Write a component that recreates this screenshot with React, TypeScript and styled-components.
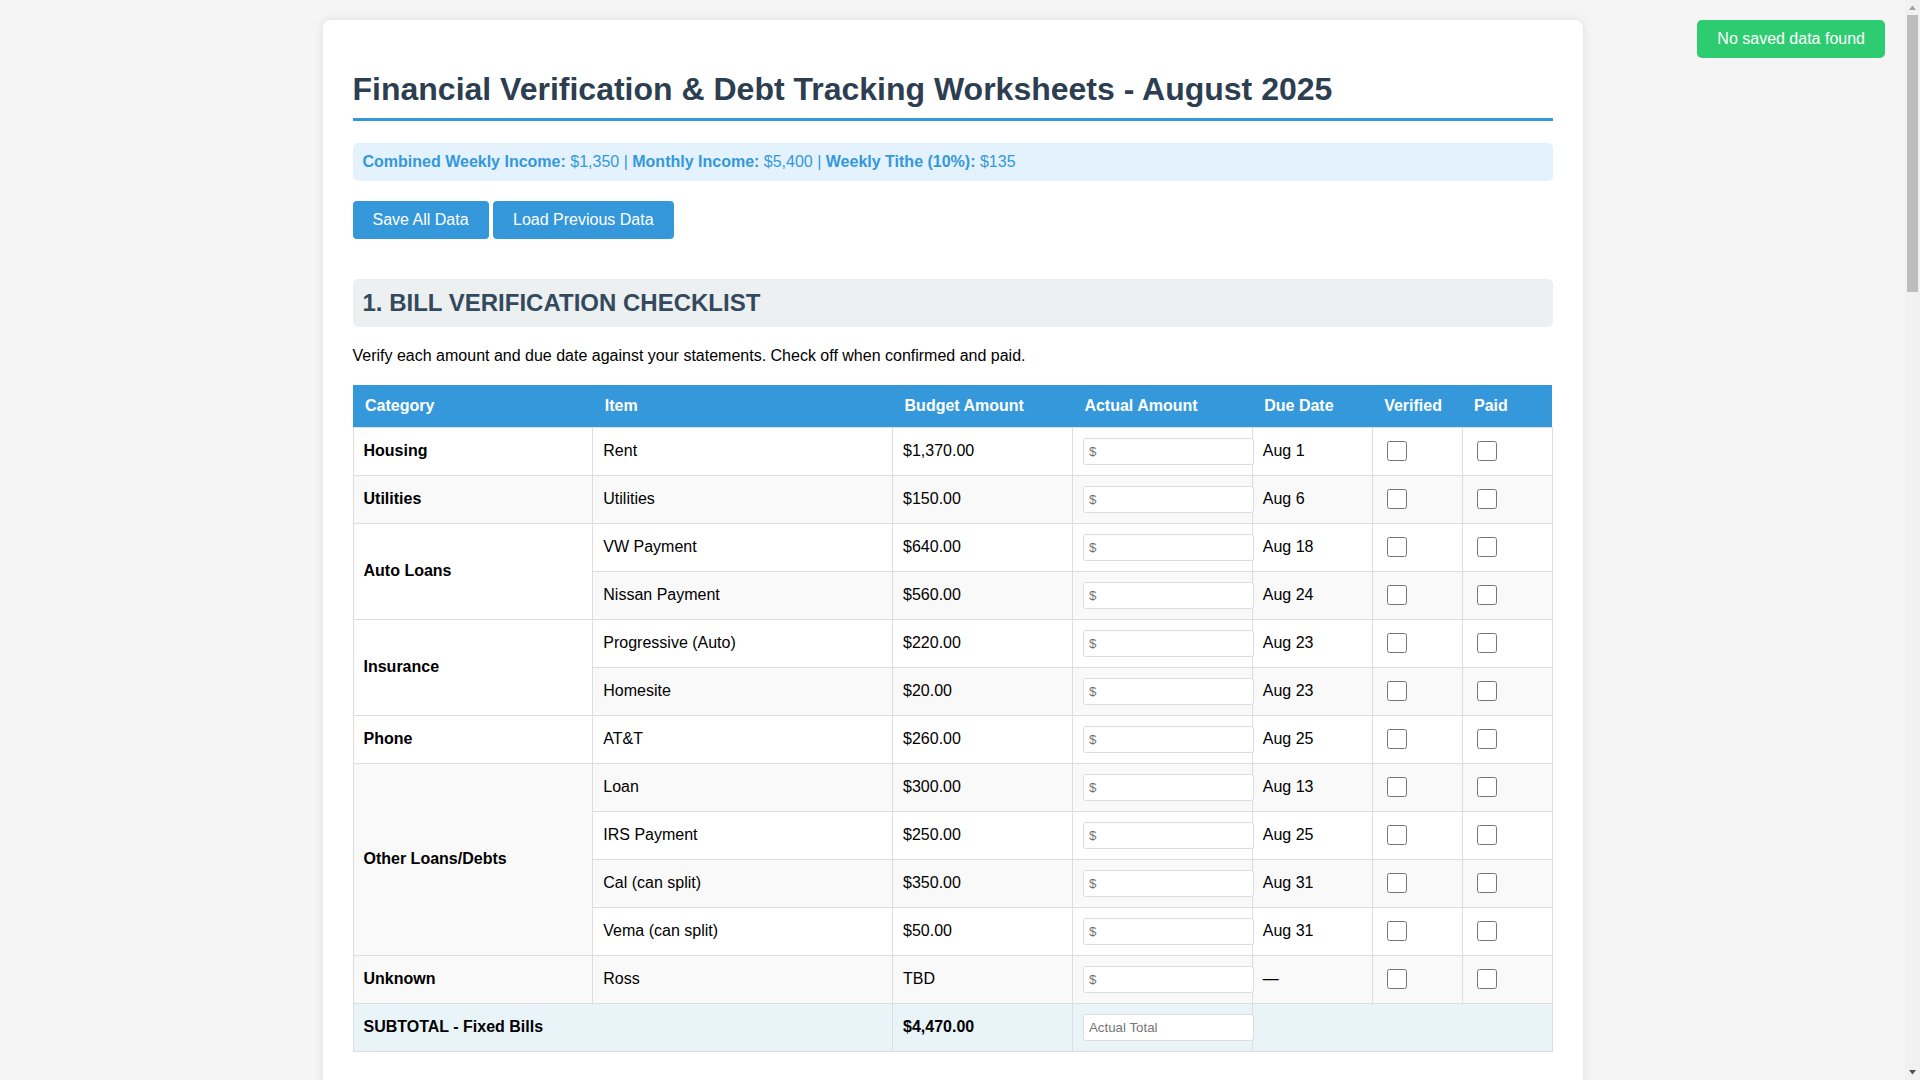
import React from "react";
import styled, { createGlobalStyle } from "styled-components";

const GlobalStyle = createGlobalStyle`
  html, body { margin: 0; padding: 0; }
  body {
    background: #f5f5f5;
    color: #000;
    font-family: "Liberation Sans", Arial, sans-serif;
    font-size: 16px;
    padding: 20px 35px 20px 20px;
  }
`;

const Card = styled.main`
  box-sizing: content-box;
  max-width: 1200px;
  min-height: 3990px;
  margin: 0 auto;
  padding: 30px;
  background: #fff;
  border-radius: 8px;
  box-shadow: 0 0 10px rgba(0, 0, 0, 0.1);
`;

const Toast = styled.div`
  position: fixed;
  top: 20px;
  right: 35px;
  padding: 10px 20px;
  background: #2ecc71;
  color: #fff;
  border-radius: 5px;
`;

const Scrollbar = styled.div`
  position: fixed;
  top: 0;
  right: 0;
  bottom: 0;
  display: flex;
  flex-direction: column;
  width: 15px;
  background: #f1f1f1;
`;

const ScrollThumb = styled.div`
  height: 277px;
  margin: 0 2px;
  background: #bdbdbd;
`;

const ScrollSpacer = styled.div`
  flex: 1;
`;

const ScrollArrow = styled.svg`
  display: block;
  width: 15px;
  height: 15px;
  flex: none;
`;

const Title = styled.h1`
  margin: 21px 0 22px;
  padding-bottom: 10px;
  border-bottom: 3px solid #3498db;
  color: #2c3e50;
  font-size: 32px;
  font-weight: 700;
`;

const Income = styled.div`
  margin-bottom: 20px;
  padding: 10px;
  background: #e3f2fd;
  border-radius: 5px;
  color: #3498db;
  line-height: 18px;
`;

const Actions = styled.div`
  display: flex;
  gap: 4.45px;
  margin-bottom: 40px;
`;

const ActionButton = styled.button`
  padding: 10px 20px;
  border: none;
  border-radius: 4px;
  background: #3498db;
  color: #fff;
  font: inherit;
  line-height: 18px;
`;

const SectionTitle = styled.h2`
  margin: 0 0 20px;
  padding: 10px;
  background: #ecf0f1;
  border-radius: 5px;
  color: #34495e;
  font-size: 24px;
  font-weight: 700;
  line-height: 28px;
`;

const Intro = styled.p`
  margin: 0 0 20px;
  line-height: 18px;
`;

const Table = styled.table`
  width: 100%;
  border-collapse: collapse;
  table-layout: fixed;
`;

const Head = styled.th`
  padding: 12px;
  background: #3498db;
  color: #fff;
  font-weight: 700;
  text-align: left;
  line-height: 18px;
`;

const Row = styled.tr`
  &:nth-child(even) {
    background: #f9f9f9;
  }
`;

const TotalRow = styled.tr`
  background: #e8f4f8;
  font-weight: 700;
`;

const Cell = styled.td`
  padding: 10px;
  border: 1px solid #ddd;
`;

const TextCell = styled(Cell)`
  padding: 9px 10px 11px;
`;

const CategoryCell = styled(TextCell)`
  font-weight: 700;
`;

const AmountInput = styled.input`
  box-sizing: content-box;
  width: 100%;
  padding: 5px;
  border: 1px solid #ddd;
  border-radius: 3px;
  background: #fff;
  font-family: "Liberation Sans", Arial, sans-serif;
  font-size: 13.333px;
`;

const Check = styled.input.attrs({ type: "checkbox" })`
  width: 20px;
  height: 20px;
`;

type Bill = { category?: string; span?: number; item: string; budget: string; due: string };

const bills: Bill[] = [
  { category: "Housing", item: "Rent", budget: "$1,370.00", due: "Aug 1" },
  { category: "Utilities", item: "Utilities", budget: "$150.00", due: "Aug 6" },
  { category: "Auto Loans", span: 2, item: "VW Payment", budget: "$640.00", due: "Aug 18" },
  { item: "Nissan Payment", budget: "$560.00", due: "Aug 24" },
  { category: "Insurance", span: 2, item: "Progressive (Auto)", budget: "$220.00", due: "Aug 23" },
  { item: "Homesite", budget: "$20.00", due: "Aug 23" },
  { category: "Phone", item: "AT&T", budget: "$260.00", due: "Aug 25" },
  { category: "Other Loans/Debts", span: 4, item: "Loan", budget: "$300.00", due: "Aug 13" },
  { item: "IRS Payment", budget: "$250.00", due: "Aug 25" },
  { item: "Cal (can split)", budget: "$350.00", due: "Aug 31" },
  { item: "Vema (can split)", budget: "$50.00", due: "Aug 31" },
  { category: "Unknown", item: "Ross", budget: "TBD", due: "—" },
];

const columns = [
  ["Category", "20%"],
  ["Item", "25%"],
  ["Budget Amount", "15%"],
  ["Actual Amount", "15%"],
  ["Due Date", "10%"],
  ["Verified", "7.5%"],
  ["Paid", "7.5%"],
];

export default function App() {
  return (
    <>
      <GlobalStyle />
      <Toast>No saved data found</Toast>
      <Scrollbar aria-hidden="true">
        <ScrollArrow viewBox="0 0 15 15">
          <polygon points="7.5,5.5 11,10 4,10" fill="#a3a3a3" />
        </ScrollArrow>
        <ScrollThumb />
        <ScrollSpacer />
        <ScrollArrow viewBox="0 0 15 15">
          <polygon points="4,5 11,5 7.5,9.5" fill="#505050" />
        </ScrollArrow>
      </Scrollbar>
      <Card>
        <Title>Financial Verification &amp; Debt Tracking Worksheets - August 2025</Title>
        <Income>
          <strong>Combined Weekly Income:</strong> $1,350 | <strong>Monthly Income:</strong> $5,400 |{" "}
          <strong>Weekly Tithe (10%):</strong> $135
        </Income>
        <Actions>
          <ActionButton>Save All Data</ActionButton>
          <ActionButton>Load Previous Data</ActionButton>
        </Actions>
        <SectionTitle>1. BILL VERIFICATION CHECKLIST</SectionTitle>
        <Intro>Verify each amount and due date against your statements. Check off when confirmed and paid.</Intro>
        <Table>
          <colgroup>
            {columns.map(([name, width]) => (
              <col key={name} style={{ width }} />
            ))}
          </colgroup>
          <thead>
            <tr>
              {columns.map(([name]) => (
                <Head key={name}>{name}</Head>
              ))}
            </tr>
          </thead>
          <tbody>
            {bills.map((bill) => (
              <Row key={bill.item}>
                {bill.category && <CategoryCell rowSpan={bill.span ?? 1}>{bill.category}</CategoryCell>}
                <TextCell>{bill.item}</TextCell>
                <TextCell>{bill.budget}</TextCell>
                <Cell>
                  <AmountInput placeholder="$" />
                </Cell>
                <TextCell>{bill.due}</TextCell>
                <Cell>
                  <Check />
                </Cell>
                <Cell>
                  <Check />
                </Cell>
              </Row>
            ))}
            <TotalRow>
              <TextCell colSpan={2}>SUBTOTAL - Fixed Bills</TextCell>
              <TextCell>$4,470.00</TextCell>
              <Cell>
                <AmountInput placeholder="Actual Total" />
              </Cell>
              <Cell colSpan={3} />
            </TotalRow>
          </tbody>
        </Table>
      </Card>
    </>
  );
}
